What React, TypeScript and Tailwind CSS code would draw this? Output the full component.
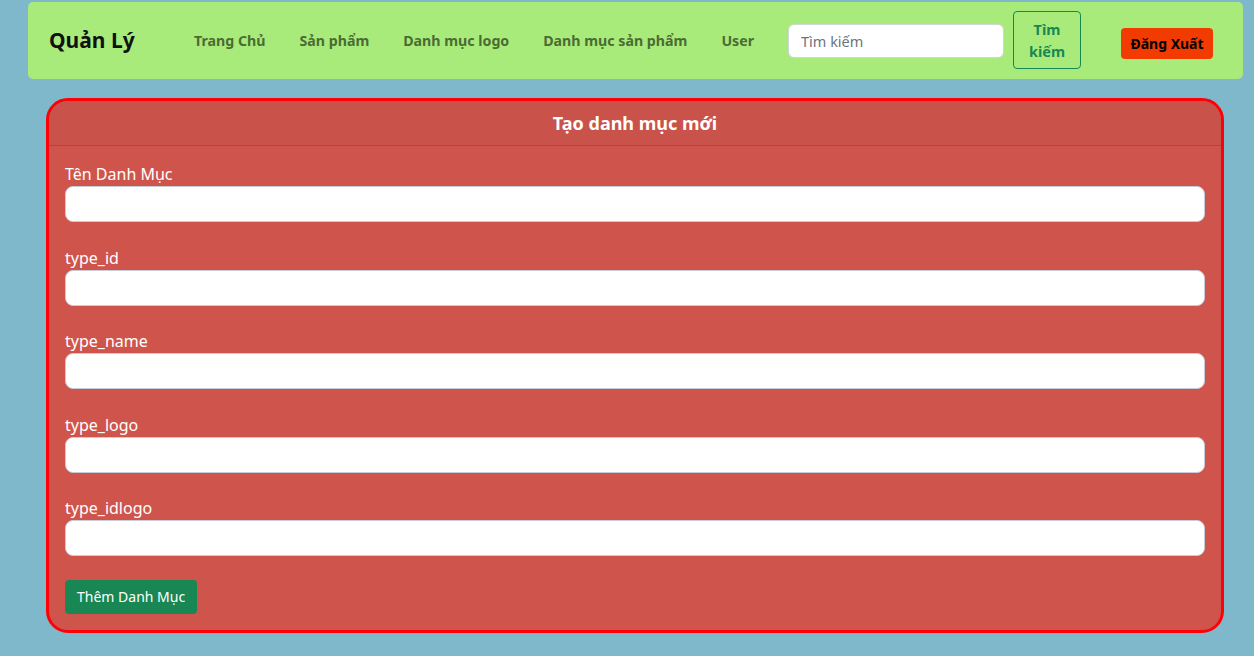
export default function App() {
  const fields = ["Tên Danh Mục", "type_id", "type_name", "type_logo", "type_idlogo"];
  const links = ["Trang Chủ", "Sản phẩm", "Danh mục logo", "Danh mục sản phẩm", "User"];

  return (
    <div className="min-h-[656px] bg-[#7eb8ca] pt-[2px] pb-6 font-['Noto_Sans',sans-serif]">
      {/* navbar */}
      <nav className="ml-[28px] w-[1215px] h-[77px] bg-[#a8eb7a] rounded-[5px] flex items-center pl-[21px] pr-[30px]">
        <span className="text-[21px] font-bold text-[#111] w-[145px]">Quản Lý</span>
        <div className="flex items-center gap-[34px]">
          {links.map((l) => (
            <a key={l} href="#" className="text-[14.2px] font-bold text-[#4b6b33]">
              {l}
            </a>
          ))}
        </div>
        <div className="ml-auto flex items-center">
          <input
            placeholder="Tìm kiếm"
            className="w-[216px] h-[34px] bg-white rounded-[6px] border border-[#d0d5da] px-3 text-[14.5px] text-[#333] placeholder:text-[#6c757d] outline-none"
          />
          <button className="ml-[9px] w-[68px] h-[58px] -mt-[1px] border border-[#198754] rounded-[4px] text-[#198754] font-bold text-[14.5px] leading-[22px]">
            Tìm kiếm
          </button>
          <button className="ml-[40px] mt-[6px] w-[92px] h-[31px] bg-[#f23b00] rounded-[4px] text-black font-bold text-[14px]">
            Đăng Xuất
          </button>
        </div>
      </nav>

      {/* form card */}
      <div className="ml-[46px] mt-[19px] w-[1178px] border-[3px] border-[#ff0008] rounded-[22px] bg-[#cf554c] overflow-hidden">
        <div className="h-[45px] bg-[#c9524a] border-b border-[#b0453e] flex items-center justify-center">
          <h2 className="text-white font-bold text-[18px]">Tạo danh mục mới</h2>
        </div>
        <div className="p-4">
          {fields.map((f) => (
            <div key={f} className="mb-[23.5px]">
              <label className="block text-white text-[16px] leading-[24px]">{f}</label>
              <input className="block w-full h-[36px] bg-white rounded-[8px] border border-[#c9ccd6] outline-none px-3" />
            </div>
          ))}
          <button className="h-[34px] px-3 bg-[#198754] rounded-[4px] text-white text-[14px]">
            Thêm Danh Mục
          </button>
        </div>
      </div>
    </div>
  );
}
